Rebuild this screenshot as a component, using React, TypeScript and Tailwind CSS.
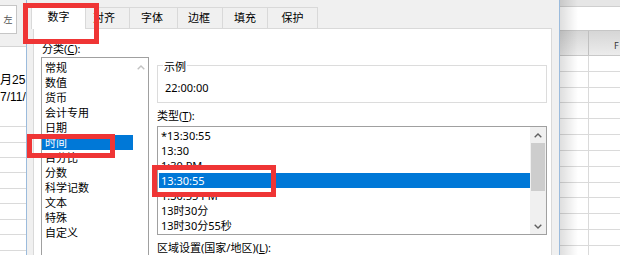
import React from "react";

const catItems = ["常规", "数值", "货币", "会计专用", "日期", "时间", "百分比", "分数", "科学记数", "文本", "特殊", "自定义"];
const typeItems = ["*13:30:55", "13:30", "1:30 PM", "13:30:55", "1:30:55 PM", "13时30分", "13时30分55秒"];

function Chevron({ up, color }: { up: boolean; color: string }) {
  return (
    <svg width="8" height="5" viewBox="0 0 8 5" className="block">
      <path
        d={up ? "M0.7 4.3 L4 1 L7.3 4.3" : "M0.7 0.7 L4 4 L7.3 0.7"}
        fill="none"
        stroke={color}
        strokeWidth="1.4"
      />
    </svg>
  );
}

function LeftSheet() {
  const rows = [16, 16, 15, 15, 16, 15, 16, 15, 16, 16];
  return (
    <div className="w-[26px] shrink-0 h-full bg-white flex flex-col overflow-hidden">
      <div className="h-[47px] shrink-0 bg-[#f0f0f0] border-b border-[#d5d5d5] pt-[5px]">
        <div className="w-[17px] h-[29px] bg-white border border-l-0 border-[#c6c6c6] flex items-center justify-center text-[9px] text-[#555] leading-none">
          左
        </div>
      </div>
      <div className="h-[64px] shrink-0 pt-[25px] text-[12px] leading-[17px] text-black whitespace-nowrap font-['Liberation_Sans','Noto_Sans_CJK_SC',sans-serif]">
        <div>月25</div>
        <div>7/11/</div>
      </div>
      {rows.map((h, i) => (
        <div key={i} className="shrink-0 border-b border-[#dadada]" style={{ height: h }} />
      ))}
    </div>
  );
}

function RightSheet() {
  const rows = [16, 16, 15, 16, 16, 16, 16, 16, 15, 16, 16, 16, 16];
  return (
    <div className="relative w-[60px] shrink-0 h-full bg-white flex flex-col overflow-hidden">
      <div className="h-[7px] shrink-0 bg-[#e6e6e6] border-b border-[#cfcfcf]" />
      <div className="h-[24px] shrink-0 bg-white border-b border-[#c6c6c6]" />
      <div className="h-[25px] shrink-0 flex bg-gradient-to-b from-[#d6d6d6] to-[#ececec] border-b border-[#c8c8c8]">
        <div className="w-[29px] shrink-0 border-r border-[#c0c0c0]" />
        <div className="flex-1 pl-[25px] pt-[10px] text-[9px] leading-[10px] text-[#333]">F</div>
      </div>
      {rows.map((h, i) => (
        <div key={i} className="shrink-0 flex border-b border-[#dadada]" style={{ height: h }}>
          <div className="w-[29px] shrink-0 border-r border-[#dadada]" />
        </div>
      ))}
      <div className="absolute inset-y-0 left-0 w-[18px] bg-gradient-to-r from-[rgba(0,0,0,0.13)] to-transparent" />
    </div>
  );
}

function Tabs() {
  const others: [string, number, string][] = [
    ["对齐", 44, "justify-start pl-[7px]"],
    ["字体", 48, "justify-center pr-[3px]"],
    ["边框", 45, "justify-center pr-[2px]"],
    ["填充", 45, "justify-center"],
    ["保护", 50, "justify-center"],
  ];
  return (
    <div className="relative z-10 h-[28px] shrink-0 pt-[5px] -ml-[2px] flex items-end">
      <div className="w-[55px] h-[24px] -mb-px bg-white border border-b-0 border-[#d9d9d9] flex items-center justify-center">
        数字
      </div>
      {others.map(([t, w, cls]) => (
        <div
          key={t}
          className={"h-[21px] border-t border-r border-[#d9d9d9] bg-[#f0f0f0] flex items-center " + cls}
          style={{ width: w }}
        >
          {t}
        </div>
      ))}
    </div>
  );
}

function CategoryList() {
  return (
    <div className="w-[108px] h-[210px] border border-[#a0a0a0] bg-white flex">
      <div className="w-[91px] pt-[2px]">
        {catItems.map((t) => (
          <div
            key={t}
            className={
              "h-[15px] leading-[15px] pl-[3px] whitespace-nowrap " +
              (t === "时间" ? "bg-[#0078d7] text-white" : "text-black")
            }
          >
            {t}
          </div>
        ))}
      </div>
      <div className="w-[15px] bg-white flex flex-col items-center pt-[7px]">
        <Chevron up color="#c2c2c2" />
      </div>
    </div>
  );
}

function TypeList() {
  return (
    <div className="mt-[3px] h-[109px] border border-[#a0a0a0] bg-white flex">
      <div className="flex-1 pt-[1px]">
        {typeItems.map((t, i) => (
          <div
            key={i}
            className={
              "h-[15px] leading-[15px] ml-[1px] pl-[2px] whitespace-nowrap " +
              (i === 3 ? "bg-[#0078d7] text-white" : "text-black")
            }
          >
            {t}
          </div>
        ))}
      </div>
      <div className="w-[16px] bg-[#f0f0f0] flex flex-col">
        <div className="h-[16px] flex items-center justify-center">
          <Chevron up color="#606060" />
        </div>
        <div className="h-[48px] mx-[1px] bg-[#cdcdcd]" />
        <div className="flex-1" />
        <div className="h-[16px] flex items-center justify-center">
          <Chevron up={false} color="#606060" />
        </div>
      </div>
    </div>
  );
}

function Dialog() {
  return (
    <div className="w-[534px] shrink-0 h-full bg-[#f0f0f0] border-x border-[#9bbbdc] pl-[6px] pr-[7px] flex flex-col">
      <Tabs />
      <div className="flex-1 bg-white border border-[#d9d9d9] flex">
        <div className="pl-[7px] pt-[12px] w-[115px] shrink-0">
          <div className="h-[16px] leading-[15px] pl-[1px]">
            分类(<span className="underline">C</span>):
          </div>
          <CategoryList />
        </div>
        <div className="flex-1 ml-[8px] mr-[4px] pt-[36px] flex flex-col">
          <div className="relative h-[38px] border border-[#dcdcdc] pl-[7px] pt-[14px]">
            <div className="absolute left-[5px] top-[-7px] bg-white px-[1px] leading-[15px]">示例</div>
            <div className="leading-[15px]">22:00:00</div>
          </div>
          <div className="mt-[5px] h-[15px] leading-[15px]">
            类型(<span className="underline">T</span>):
          </div>
          <TypeList />
          <div className="mt-[5px] h-[15px] leading-[15px] whitespace-nowrap">
            区域设置(国家/地区)(<span className="underline">L</span>):
          </div>
        </div>
      </div>
    </div>
  );
}

export default function App() {
  return (
    <div className="relative w-[620px] h-[255px] overflow-hidden flex bg-white text-black text-[11px] font-['Noto_Sans','Noto_Sans_CJK_SC',sans-serif]">
      <LeftSheet />
      <Dialog />
      <RightSheet />
      <div className="absolute left-[23px] top-[3px] w-[76px] h-[41px] border-[5px] border-[#ef3535] z-20" />
      <div className="absolute left-[27px] top-[134px] w-[88px] h-[24px] border-[5px] border-[#ef3535] z-20" />
      <div className="absolute left-[152px] top-[165px] w-[124px] h-[32px] border-[5px] border-[#ef3535] z-20" />
    </div>
  );
}
